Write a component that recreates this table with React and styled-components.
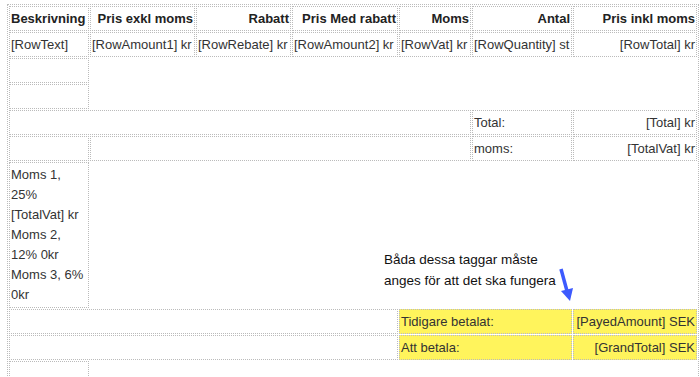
import React from "react";
import styled, { createGlobalStyle } from "styled-components";

const GlobalStyle = createGlobalStyle`
  body {
    margin: 0;
    padding: 4px 0 0 7px;
    background: #fff;
    font-family: "Liberation Sans", Arial, sans-serif;
    font-size: 13px;
    color: #333;
  }
`;

const Page = styled.div`
  position: relative;
  width: 692px;
`;

const Table = styled.table`
  width: 692px;
  table-layout: fixed;
  border-collapse: separate;
  border-spacing: 1px;
  border: 1px dotted #bbb;
`;

const Row = styled.tr`
  height: 25px;
`;

const Head = styled.th`
  border: 1px dotted #bbb;
  padding: 1px 1px;
  line-height: 21px;
  font-weight: bold;
  color: #222;
  white-space: nowrap;
  overflow: hidden;
  text-align: ${p => p.$align || "right"};
`;

const Cell = styled.td`
  border: 1px dotted #bbb;
  padding: ${p => (p.$tall ? "2px 1px" : "1px 1px")};
  line-height: ${p => (p.$tall ? "20px" : "21px")};
  white-space: ${p => (p.$tall ? "normal" : "nowrap")};
  overflow: hidden;
  vertical-align: middle;
  text-align: ${p => p.$align || "left"};
  background: ${p => (p.$marked ? "#fff45c" : "transparent")};
`;

const Note = styled.div`
  position: absolute;
  left: 377px;
  top: 245px;
  font-size: 13.5px;
  line-height: 21px;
  color: #111;
`;

const Arrow = styled.svg`
  position: absolute;
  left: 543px;
  top: 258px;
`;

const columns = [80, 105, 95, 106, 72, 100, 124];

const headers = [
  ["Beskrivning", "left"],
  ["Pris exkl moms"],
  ["Rabatt"],
  ["Pris Med rabatt"],
  ["Moms"],
  ["Antal"],
  ["Pris inkl moms"],
];

const rowTags = [
  ["[RowText]", "left"],
  ["[RowAmount1] kr"],
  ["[RowRebate] kr"],
  ["[RowAmount2] kr"],
  ["[RowVat] kr"],
  ["[RowQuantity] st"],
  ["[RowTotal] kr", "right"],
];

const Empty = () => <Cell>&nbsp;</Cell>;

export default function App() {
  return (
    <>
      <GlobalStyle />
      <Page>
        <Table>
          <colgroup>
            {columns.map((w, i) => (
              <col key={i} style={{ width: w }} />
            ))}
          </colgroup>
          <tbody>
            <Row>
              {headers.map(([label, align]) => (
                <Head key={label} $align={align}>{label}</Head>
              ))}
            </Row>
            <Row>
              {rowTags.map(([tag, align]) => (
                <Cell key={tag} $align={align}>{tag}</Cell>
              ))}
            </Row>
            <Row>
              <Empty />
            </Row>
            <Row>
              <Empty />
            </Row>
            <Row>
              <Cell colSpan={5}>&nbsp;</Cell>
              <Cell>Total:</Cell>
              <Cell $align="right">[Total] kr</Cell>
            </Row>
            <Row>
              <Empty />
              <Cell colSpan={4}>&nbsp;</Cell>
              <Cell>moms:</Cell>
              <Cell $align="right">[TotalVat] kr</Cell>
            </Row>
            <tr>
              <Cell $tall>
                Moms 1, 25% [TotalVat] kr
                <br />
                Moms 2, 12% 0kr
                <br />
                Moms 3, 6% 0kr
              </Cell>
            </tr>
            <Row>
              <Cell colSpan={4}>&nbsp;</Cell>
              <Cell colSpan={2} $marked>Tidigare betalat:</Cell>
              <Cell $marked $align="right">[PayedAmount] SEK</Cell>
            </Row>
            <Row>
              <Cell colSpan={4}>&nbsp;</Cell>
              <Cell colSpan={2} $marked>Att betala:</Cell>
              <Cell $marked $align="right">[GrandTotal] SEK</Cell>
            </Row>
            <Row>
              <Empty />
            </Row>
          </tbody>
        </Table>

        <Note>
          Båda dessa taggar måste
          <br />
          anges för att det ska fungera
        </Note>
        <Arrow width="30" height="46" viewBox="0 0 30 46">
          <line x1="11" y1="7" x2="17" y2="29" stroke="#3d5afe" strokeWidth="3.5" />
          <polygon points="20,39 23,26 11,29" fill="#3d5afe" />
        </Arrow>
      </Page>
    </>
  );
}
